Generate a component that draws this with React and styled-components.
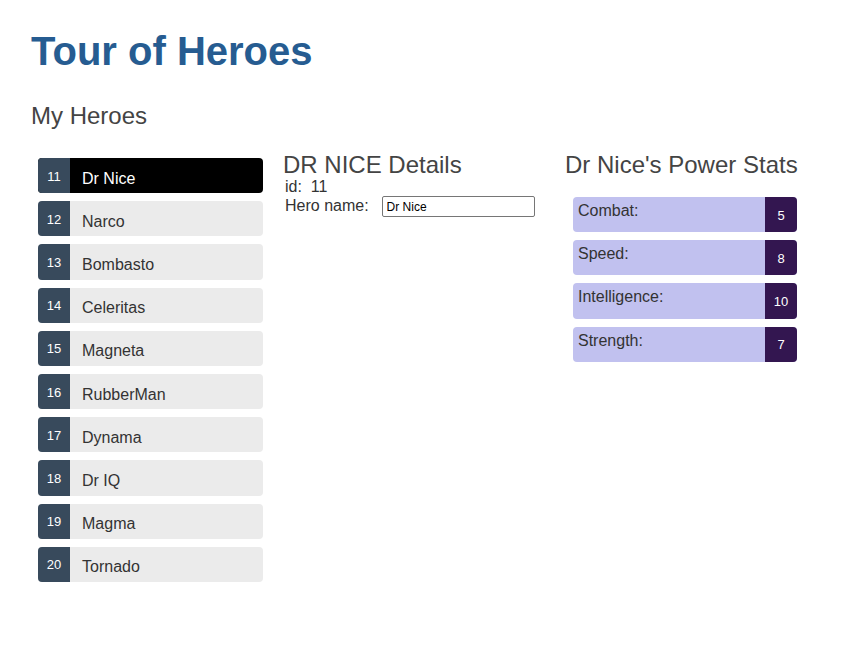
import React from "react";
import styled, { createGlobalStyle } from "styled-components";

const Global = createGlobalStyle`
  html, body { margin: 0; padding: 0; background: #fff; }
  body { font-family: "Liberation Sans", Arial, sans-serif; }
`;

const Page = styled.div`
  padding: 28px 0 0 31px;
  font-family: "Liberation Sans", Arial, sans-serif;
`;

const Title = styled.h1`
  margin: 0;
  font-size: 40px;
  line-height: 46px;
  font-weight: 700;
  color: #265c91;
`;

const SubTitle = styled.h2`
  margin: 28px 0 0 0;
  font-size: 24px;
  line-height: 28px;
  font-weight: 400;
  color: #444;
`;

const Columns = styled.div`
  display: flex;
  margin-top: 20px;
`;

const ListCol = styled.ul`
  list-style: none;
  margin: 0;
  padding: 8px 0 0 7px;
  width: 225px;
  display: flex;
  flex-direction: column;
  gap: 8px;
`;

const HeroItem = styled.li`
  display: flex;
  align-items: center;
  height: 35.2px;
  border-radius: 4px;
  overflow: hidden;
  background: ${(p) => (p.$selected ? "#000" : "#ebebeb")};
  color: ${(p) => (p.$selected ? "#fff" : "#333")};
  cursor: pointer;
`;

const Badge = styled.span`
  align-self: stretch;
  width: 32px;
  display: flex;
  align-items: center;
  justify-content: center;
  padding-top: 1px;
  box-sizing: border-box;
  background: #384a5c;
  color: #fff;
  font-size: 13px;
`;

const HeroName = styled.span`
  margin-left: 12px;
  padding-top: 6px;
  font-size: 16px;
  line-height: 18px;
`;

const DetailCol = styled.div`
  margin-left: 20px;
  padding-top: 2px;
  width: 280px;
`;

const ColHeading = styled.h2`
  margin: 0;
  padding-left: ${(p) => p.$indent || 0}px;
  font-size: 24px;
  line-height: 26px;
  font-weight: 400;
  color: #444;
`;

const IdLine = styled.div`
  padding-left: 2px;
  font-size: 16px;
  line-height: 18px;
  color: #333;
  white-space: pre;
`;

const NameRow = styled.div`
  display: flex;
  align-items: baseline;
  padding-left: 2px;
`;

const Label = styled.label`
  font-size: 16px;
  line-height: 18px;
  color: #333;
  margin-right: 13px;
`;

const NameInput = styled.input`
  box-sizing: border-box;
  width: 153px;
  height: 21px;
  padding: 0 3px 0 4px;
  border: 1px solid #767676;
  border-radius: 2px;
  font-family: "Liberation Sans", Arial, sans-serif;
  font-size: 12px;
  color: #000;
  outline: none;
`;

const StatsCol = styled.div`
  padding-top: 2px;
  width: 240px;
`;

const StatList = styled.ul`
  list-style: none;
  margin: 19px 0 0 10px;
  padding: 0;
  width: 224px;
  display: flex;
  flex-direction: column;
  gap: 8px;
`;

const StatItem = styled.li`
  display: flex;
  height: 35.2px;
  border-radius: 4px;
  overflow: hidden;
  background: #c1c1ef;
`;

const StatLabel = styled.span`
  flex: 1;
  padding: 5px 0 0 5px;
  font-size: 16px;
  line-height: 18px;
  color: #333;
`;

const StatValue = styled.span`
  width: 32px;
  display: flex;
  align-items: center;
  justify-content: center;
  padding-top: 1px;
  box-sizing: border-box;
  background: #331650;
  color: #fff;
  font-size: 13px;
`;

const heroes = [
  [11, "Dr Nice"],
  [12, "Narco"],
  [13, "Bombasto"],
  [14, "Celeritas"],
  [15, "Magneta"],
  [16, "RubberMan"],
  [17, "Dynama"],
  [18, "Dr IQ"],
  [19, "Magma"],
  [20, "Tornado"],
];

const stats = [
  ["Combat:", 5],
  ["Speed:", 8],
  ["Intelligence:", 10],
  ["Strength:", 7],
];

export default function App() {
  return (
    <Page>
      <Global />
      <Title>Tour of Heroes</Title>
      <SubTitle>My Heroes</SubTitle>
      <Columns>
        <ListCol>
          {heroes.map(([id, name]) => (
            <HeroItem key={id} $selected={id === 11}>
              <Badge>{id}</Badge>
              <HeroName>{name}</HeroName>
            </HeroItem>
          ))}
        </ListCol>
        <DetailCol>
          <ColHeading>DR NICE Details</ColHeading>
          <IdLine>{"id:  11"}</IdLine>
          <NameRow>
            <Label htmlFor="hero-name">Hero name:</Label>
            <NameInput id="hero-name" defaultValue="Dr Nice" />
          </NameRow>
        </DetailCol>
        <StatsCol>
          <ColHeading $indent={2}>Dr Nice's Power Stats</ColHeading>
          <StatList>
            {stats.map(([label, value]) => (
              <StatItem key={label}>
                <StatLabel>{label}</StatLabel>
                <StatValue>{value}</StatValue>
              </StatItem>
            ))}
          </StatList>
        </StatsCol>
      </Columns>
    </Page>
  );
}
